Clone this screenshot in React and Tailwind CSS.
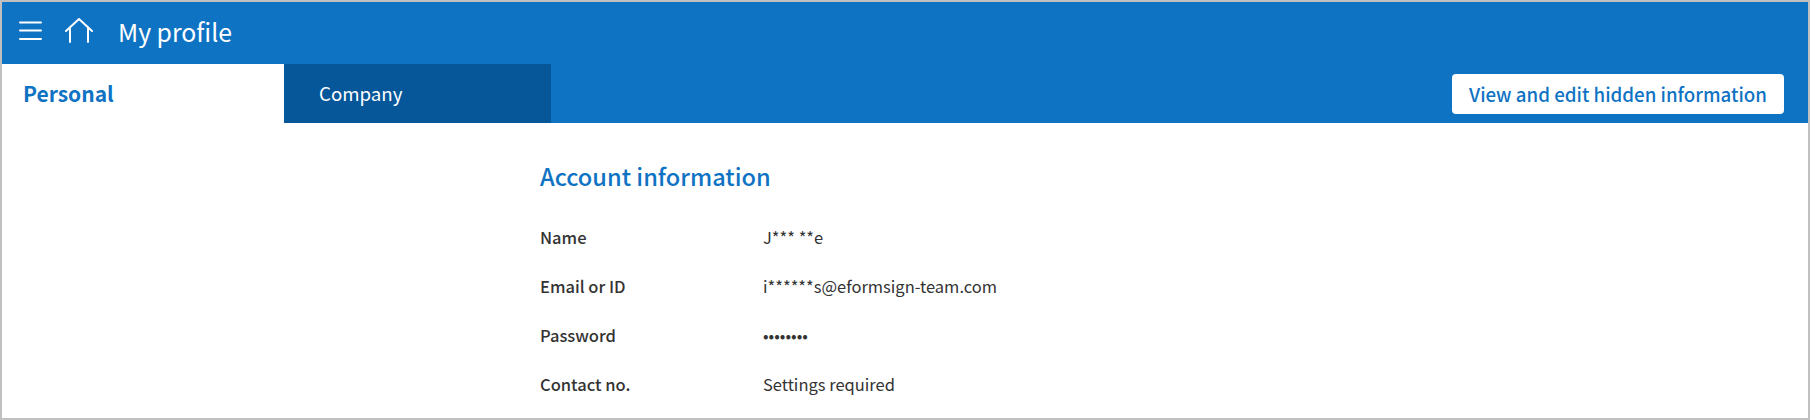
const rows = [
  ['Name', 'J*** **e'],
  ['Email or ID', 'i******s@eformsign-team.com'],
  ['Password', '••••••••'],
  ['Contact no.', 'Settings required'],
];

export default function App() {
  return (
    <div className="h-[420px] w-[1810px] overflow-hidden border-2 border-[#c0c0c0] bg-white font-['Noto_Sans_CJK_KR',sans-serif]">
      <header className="flex h-[62px] items-start bg-[#0f73c4] text-white">
        <svg className="ml-[16px] mt-[18px] h-[20px] w-[24px]" viewBox="0 0 24 20" fill="none" stroke="currentColor" strokeWidth="2" strokeLinecap="round">
          <path d="M2 2.5h21M2 10.5h21M2 19h21" />
        </svg>
        <svg className="ml-[23px] mt-[16px] h-[26px] w-[28px]" viewBox="0 0 28 26" fill="none" stroke="currentColor" strokeWidth="2" strokeLinecap="round" strokeLinejoin="round">
          <path d="M1 13 14 1l13 12M5 9v15M23 9v15" />
        </svg>
        <h1 className="ml-[25px] self-center -mt-[3px] text-[24.8px] font-normal">My profile</h1>
      </header>
      <div className="flex h-[59px] items-stretch bg-[#0f73c4]">
        <div className="flex w-[282px] items-center bg-white pl-[21px] text-[21px] font-bold text-[#0f73c4]">Personal</div>
        <div className="flex w-[267px] items-center bg-[#055799] pl-[35px] text-[18.7px] text-white">Company</div>
        <button className="mt-[10px] ml-auto mr-[24px] h-[40px] w-[332px] rounded-[4px] bg-white text-[18.7px] font-medium text-[#0f73c4]">
          View and edit hidden information
        </button>
      </div>
      <main className="pl-[538px] pt-[35px]">
        <h2 className="text-[23.6px] font-medium leading-[36px] text-[#0f73c4]">Account information</h2>
        <div className="mt-[19px] flex flex-col">
          {rows.map(([label, value]) => (
            <div key={label} className="flex h-[49px] items-center text-[16.5px] text-[#333333]">
              <span className="w-[223px] font-medium">{label}</span>
              <span>{value}</span>
            </div>
          ))}
        </div>
      </main>
    </div>
  );
}
